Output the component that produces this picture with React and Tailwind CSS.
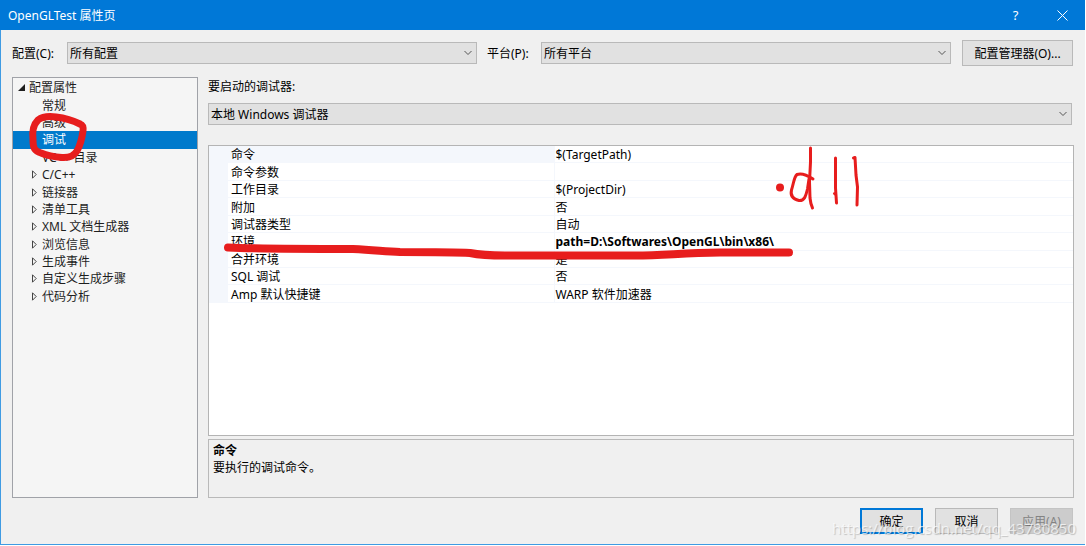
import React, { useState } from "react";

const treeItems = [
  { label: "常规" },
  { label: "高级" },
  { label: "调试" },
  { label: "VC++ 目录" },
  { label: "C/C++", expandable: true },
  { label: "链接器", expandable: true },
  { label: "清单工具", expandable: true },
  { label: "XML 文档生成器", expandable: true },
  { label: "浏览信息", expandable: true },
  { label: "生成事件", expandable: true },
  { label: "自定义生成步骤", expandable: true },
  { label: "代码分析", expandable: true },
];

const properties = [
  { name: "命令", value: "$(TargetPath)" },
  { name: "命令参数", value: "" },
  { name: "工作目录", value: "$(ProjectDir)" },
  { name: "附加", value: "否" },
  { name: "调试器类型", value: "自动" },
  { name: "环境", value: "path=D:\\Softwares\\OpenGL\\bin\\x86\\", changed: true },
  { name: "合并环境", value: "是" },
  { name: "SQL 调试", value: "否" },
  { name: "Amp 默认快捷键", value: "WARP 软件加速器" },
];

function Dropdown({ id, option, className }) {
  return (
    <div className={`relative ${className}`}>
      <select
        id={id}
        className="block h-[22px] w-full appearance-none border border-[#b9b9b9] bg-[#e1e1e1] pl-[2px] pr-5 pt-[2px] leading-[18px] outline-none"
      >
        <option>{option}</option>
      </select>
      <svg className="pointer-events-none absolute right-[5px] top-[7px]" width="8" height="8" viewBox="0 0 8 8" fill="none" stroke="#555">
        <path d="M0.5 2 L4 5.5 L7.5 2" />
      </svg>
    </div>
  );
}

function TreeRow({ item, selected, onSelect }) {
  return (
    <li className="flex flex-1">
      <button
        type="button"
        onClick={onSelect}
        className={`flex w-full items-center pl-[18px] text-left ${selected ? "bg-[#007acc] text-white" : ""}`}
      >
        <span className="w-[11px]">
          {item.expandable && (
            <svg width="7" height="9" viewBox="0 0 7 9" fill="none" stroke="#444">
              <path d="M1.5 0.8 L5.2 4.5 L1.5 8.2 Z" />
            </svg>
          )}
        </span>
        {item.label}
      </button>
    </li>
  );
}

function PropertyTable() {
  return (
    <table className="h-[157px] w-full table-fixed border-collapse leading-[14px]">
      <colgroup>
        <col className="w-[19px]" />
        <col className="w-[326px]" />
        <col />
      </colgroup>
      <tbody>
        {properties.map((prop, i) => (
          <tr key={prop.name}>
            <td className="bg-[#f4f7fc] p-0"></td>
            <th
              scope="row"
              className={`border-b border-r border-[#f4f7fc] p-0 pl-[3px] pt-[2px] text-left font-normal ${i === 0 ? "bg-[#f4f7fc]" : ""}`}
            >
              {prop.name}
            </th>
            <td className={`border-b border-[#f4f7fc] p-0 pl-px pt-[2px] ${prop.changed ? "font-bold" : ""}`}>
              {prop.value}
            </td>
          </tr>
        ))}
      </tbody>
    </table>
  );
}

// Red pen marks drawn over the dialog
function PenMarks() {
  return (
    <svg
      className="pointer-events-none absolute left-0 top-0"
      width="1086"
      height="546"
      viewBox="0 0 1086 546"
      fill="none"
      stroke="#e71d1d"
      strokeLinecap="round"
      strokeLinejoin="round"
    >
      <path
        strokeWidth="7"
        d="M80 124 C72 120 64 118 56 117 C49 116 42 117 38 120 C33 125 32 132 33 140 C33 149 35 151 41 153 C48 156 55 157 62 157.500 C69 158 74 156 77 151 C81 144 82 138 83 131 C83.500 127 83 125 80 124"
      />
      <path
        strokeWidth="8"
        d="M228 247.500 C260 249 310 249 353 249 C375 250 385 251.500 400 252 C430 252 455 252 470 253 C480 255 490 255.500 505 255.500 L635 255.500 C665 255.500 680 253 720 252.500 L789 252.500"
      />
      <circle cx="780" cy="187.500" r="4" fill="#e71d1d" stroke="none" />
      <g strokeWidth="3">
        <path d="M810.500 148 L810.500 162 L809.500 182 L810 198 C810.500 203 811 205 812.500 208" />
        <path d="M813 179 C807 175 801 173 797 174.500 C794 177 794 182 791.500 190 C790 196 793 199 799 200.500 C805 201 806 195 807.500 189 L809 179" />
        <path d="M835.500 158 L835.500 188 L836.500 203 M834.500 193.500 L836 195" />
        <path d="M853.500 158 L855 157.500 L856 175 L857.500 187 L857 205" />
      </g>
    </svg>
  );
}

export default function App() {
  const [selected, setSelected] = useState("调试");
  const dialogButton = "h-[26px] w-[63px]";

  return (
    <div className="relative flex min-h-screen flex-col overflow-hidden bg-white pb-px pr-px font-['Noto_Sans','Noto_Sans_CJK_SC',sans-serif] text-[12px] leading-[17px] text-black">
      <header className="flex h-[30px] items-center bg-[#0078d7] pl-2 text-white">
        <h1 className="flex-1">OpenGLTest 属性页</h1>
        <button type="button" aria-label="帮助" className="flex h-full w-[47px] items-center justify-center text-[13px]">
          ?
        </button>
        <button type="button" aria-label="关闭" className="flex h-full w-[46px] items-center justify-center">
          <svg width="11" height="11" viewBox="0 0 11 11" stroke="white">
            <path d="M0.5 0.5 L10.5 10.5 M10.5 0.5 L0.5 10.5" />
          </svg>
        </button>
      </header>

      <div className="flex flex-1 flex-col border-b border-l border-[#3f9be3] bg-[#f0f0f0] pb-[10px] pl-[11px] pr-[11px] pt-[10px]">
        <div className="flex items-center">
          <label htmlFor="config" className="w-[55px] pt-px">配置(C):</label>
          <Dropdown id="config" option="所有配置" className="flex-1" />
          <label htmlFor="platform" className="ml-[10px] w-[54px] pt-px">平台(P):</label>
          <Dropdown id="platform" option="所有平台" className="flex-1" />
          <button type="button" className="ml-[11px] mr-px h-[26px] w-[111px] border border-[#b9b9b9] bg-[#e1e1e1]">
            配置管理器(O)...
          </button>
        </div>

        <div className="mt-[11px] flex flex-1 gap-[10px]">
          <nav className="w-[186px] border border-[#a0a2a8] bg-[#f5f5f5] pt-px text-[#1e1e1e]">
            <ul className="flex h-[226px] flex-col">
              <li className="flex flex-1 items-center">
                <svg className="ml-[5px] mr-1" width="7" height="7" viewBox="0 0 7 7" fill="#1e1e1e">
                  <path d="M7 0 V7 H0 Z" />
                </svg>
                配置属性
              </li>
              {treeItems.map((item) => (
                <TreeRow
                  key={item.label}
                  item={item}
                  selected={selected === item.label}
                  onSelect={() => setSelected(item.label)}
                />
              ))}
            </ul>
          </nav>

          <main className="flex flex-1 flex-col">
            <label htmlFor="debugger" className="mb-2 block pt-px">要启动的调试器:</label>
            <Dropdown id="debugger" option="本地 Windows 调试器" className="mr-[2px]" />
            <div className="mt-5 flex-1 border border-[#b4b4b4] bg-white">
              <PropertyTable />
            </div>
            <section className="mt-[3px] h-[59px] border border-[#b9b9b9] px-1 pt-[2px]">
              <h2 className="font-bold">命令</h2>
              <p>要执行的调试命令。</p>
            </section>
          </main>
        </div>

        <footer className="mr-px mt-[10px] flex justify-end gap-3">
          <button type="button" className={`${dialogButton} border-2 border-[#0078d7] bg-[#e1e1e1]`}>确定</button>
          <button type="button" className={`${dialogButton} border border-[#b9b9b9] bg-[#e1e1e1]`}>取消</button>
          <button type="button" disabled className={`${dialogButton} border border-[#c4c4c4] bg-[#cccccc] text-[#838383]`}>应用(A)</button>
        </footer>
      </div>

      <PenMarks />
      <span className="pointer-events-none absolute bottom-2 right-[10px] font-['Open_Sans',sans-serif] text-[15px] leading-5 text-white/70 [text-shadow:1px_1px_1px_rgba(0,0,0,0.2)]">
        https://blog.csdn.net/qq_43780850
      </span>
    </div>
  );
}
